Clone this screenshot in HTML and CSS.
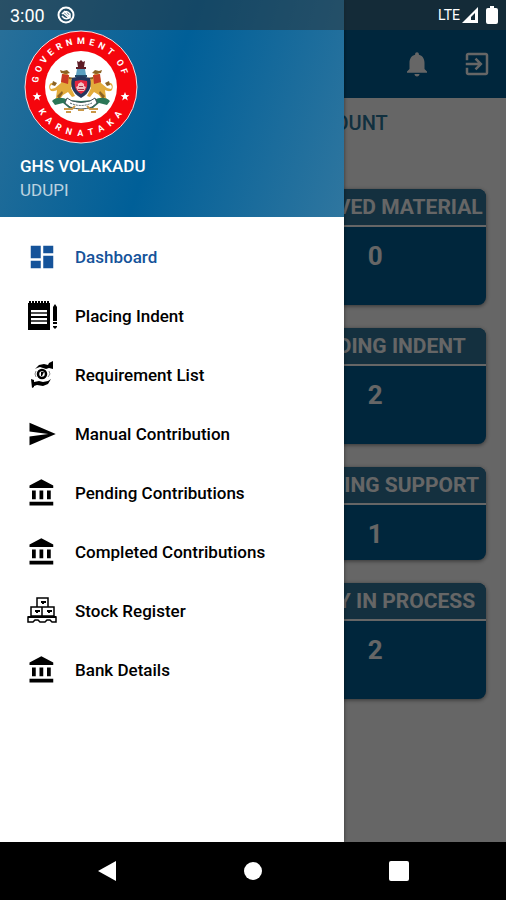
FILE: index.html
```html
<!DOCTYPE html>
<html lang="en">
<head>
  <meta charset="UTF-8">
  <meta name="viewport" content="width=device-width, initial-scale=1">
  <title>Dashboard</title>
  <link rel="stylesheet" href="styles.css">
</head>
<body>

  <!-- Shared icon shapes -->
  <svg class="sprite" aria-hidden="true">
    <symbol id="icon-bank" viewBox="0 0 24 24">
      <path d="M4 10v7h3v-7H4zm6 0v7h3v-7h-3zM2 22h19v-3H2v3zm14-12v7h3v-7h-3zM11.500 1L2 6v2h19V6l-9.500-5z"/>
    </symbol>
  </svg>

  <div class="screen">

    <!-- Page behind the drawer -->
    <div class="page">
      <header class="app-bar">
        <button type="button" class="icon-button" aria-label="Notifications">
          <svg viewBox="0 0 24 24"><path d="M12 22c1.100 0 2-.9 2-2h-4c0 1.100.9 2 2 2zm6-6v-5c0-3.070-1.640-5.640-4.500-6.320V4c0-.83-.67-1.500-1.500-1.500s-1.500.67-1.500 1.500v.68C7.630 5.360 6 7.920 6 11v5l-2 2v1h16v-1l-2-2z"/></svg>
        </button>
        <button type="button" class="icon-button" aria-label="Log out">
          <svg viewBox="0 0 24 24"><path d="M10.090 15.590L11.500 17l5-5-5-5-1.410 1.410L12.670 11H3v2h9.670l-2.580 2.590zM19 3H5c-1.110 0-2 .9-2 2v4h2V5h14v14H5v-4H3v4c0 1.100.89 2 2 2h14c1.100 0 2-.9 2-2V5c0-1.100-.9-2-2-2z"/></svg>
        </button>
      </header>

      <main class="content">
        <h1>MATERIALS REQUEST COUNT</h1>
        <div class="cards">
          <section class="card">
            <h2>APPROVED MATERIAL</h2>
            <p>0</p>
          </section>
          <section class="card">
            <h2>SPENDING INDENT</h2>
            <p>2</p>
          </section>
          <section class="card card-short">
            <h2>MATCHING SUPPORT</h2>
            <p>1</p>
          </section>
          <section class="card">
            <h2>SUPPLY IN PROCESS</h2>
            <p>2</p>
          </section>
        </div>
      </main>

      <div class="scrim"></div>

      <!-- Navigation drawer -->
      <aside class="drawer">
        <div class="drawer-header">
          <svg class="seal" viewBox="0 0 114 114" role="img" aria-label="Government of Karnataka">
            <circle cx="57" cy="57" r="56" fill="#f5050d" stroke="#f3dfe2" stroke-width="1"/>
            <circle cx="57" cy="57" r="36" fill="#fff"/>
            <path id="arc-top" d="M14 57A43 43 0 0 1 100 57" fill="none"/>
            <path id="arc-bottom" d="M8 57A49 49 0 0 0 106 57" fill="none"/>
            <text class="seal-text" dx="4 4 4 4 4 4 4 4 4 4 3 3 3"><textPath href="#arc-top">GOVERNMENT OF</textPath></text>
            <text class="seal-text" dx="25 6 6 6 6 6 6 6 6"><textPath href="#arc-bottom">KARNATAKA</textPath></text>
            <path fill="#fff" d="M13 62l1.200 3 3.200.2-2.500 2 .9 3.200-2.800-1.800-2.800 1.800.9-3.200-2.500-2 3.200-.2zM101 62l1.200 3 3.200.2-2.500 2 .9 3.200-2.800-1.800-2.800 1.800.9-3.200-2.500-2 3.200-.2z"/>
            <!-- Lion capital -->
            <path fill="#5d1c26" d="M53 31l2 1 2-2 2 2 2-1-1 6h-6zM52 37h10v2H52z"/>
            <path fill="#5b9fc0" d="M53 39h8l1 6H52z"/>
            <path fill="#21496a" d="M51 45h12v2H51z"/>
            <!-- Supporters -->
            <g id="lion">
              <path fill="#e3ac3c" d="M43 43c-3-1-5 1-5 4l-1 6-6 5-4 1c-2-2 0-5 2-4l1-2c-4-1-6 3-4 7 2 2 5 1 7 0l-1 8-3 4h5l5-7 5-3 4 5 3-1-4-8 3-5-4-5z"/>
              <path fill="#c83a24" d="M38 44l7 1-1 9-7-2z"/>
              <path fill="#8b6325" d="M36 40l3 1 4-1 3 3-4 1-5-1zM29 51l4 2-2 3-3-1zM33 66l5-5 1 2-4 6zM45 47l6 1v2l-6-1z"/>
            </g>
            <use href="#lion" transform="matrix(-1 0 0 1 114 0)"/>
            <!-- Shield -->
            <path fill="#24365d" d="M48 48l9-2 9 2c2 8 0 15-9 20-9-5-11-12-9-20z"/>
            <path fill="#e5263f" d="M51 51l6-1 6 1c1 6-1 10-6 13-5-3-7-7-6-13z"/>
            <path fill="#f3c0c2" d="M54 54l3-2 3 2v2l2 1-2 4h-6l-2-4 2-1z"/>
            <path fill="#a8324a" d="M55 56h4v1h-4zM54 59h6v1h-6z"/>
            <!-- Foliage and motto ribbon -->
            <path fill="#2b7657" d="M28 71c4-4 10-4 16-1l13 1 13-1c6-3 12-3 16 1l-3 4-8-2-6 5H45l-6-5-8 2z"/>
            <path fill="#fff" stroke="#43545a" stroke-width="1" d="M43 68l5 3q9 3 18 0l5-3 2 5-5 4q-11 4-22 0l-5-4z"/>
            <path fill="none" stroke="#485b61" stroke-width="1" stroke-dasharray="2 1" d="M46 73q11 5 22 0"/>
            <path fill="none" stroke="#c99848" stroke-width="2" d="M40 79h8l3-3M74 79h-8l-3-3M42 82h5M67 82h5M54 80h6"/>
          </svg>
          <p class="school">GHS VOLAKADU</p>
          <p class="district">UDUPI</p>
        </div>

        <nav class="menu">
          <a href="#dashboard" class="active">
            <svg viewBox="0 0 24 24"><path d="M3 13h8V3H3v10zm0 8h8v-6H3v6zm10 0h8V11h-8v10zm0-18v6h8V3h-8z"/></svg>
            Dashboard
          </a>
          <a href="#placing-indent">
            <svg viewBox="0 0 30 30">
              <path d="M1 2h22v27H1z"/>
              <path d="M3 0v3M6 0v3M9 0v3M12 0v3M15 0v3M18 0v3M21 0v3" stroke="currentColor" stroke-width="2"/>
              <path d="M4 10h16M4 14h16M4 18h16M4 22h16" stroke="#fff" stroke-width="2"/>
              <path d="M4 12h16M4 20h16" stroke="#999" stroke-width="1"/>
              <path d="M26 6l2-3 2 3v14h-4zM26 21h4v2h-4zM26 25h4v1l-2 2-2-2z"/>
            </svg>
            Placing Indent
          </a>
          <a href="#requirement-list">
            <svg viewBox="0 0 30 30">
              <path d="M8 9l4-4 5-1 4 1 1-2 4-2v8l-4-1-3 1-3-1-3-1-3 1z"/>
              <path d="M4 19l3 1v2l5-1 4 1 5-1 3-2-3 5-5 2-6-1-3 1v1l-2 1z"/>
              <circle cx="15" cy="14" r="4" fill="none" stroke="currentColor" stroke-width="2.500"/>
              <path d="M14 12h3l-2 4h-1z"/>
              <path d="M9 11l-1 3 1 3M22 11l1 3-2 3" fill="none" stroke="#888" stroke-width="1"/>
            </svg>
            Requirement List
          </a>
          <a href="#manual-contribution">
            <svg viewBox="0 0 24 24"><path d="M2 21L23 12 2 3v7l15 2-15 2z"/></svg>
            Manual Contribution
          </a>
          <a href="#pending-contributions">
            <svg><use href="#icon-bank"/></svg>
            Pending Contributions
          </a>
          <a href="#completed-contributions">
            <svg><use href="#icon-bank"/></svg>
            Completed Contributions
          </a>
          <a href="#stock-register">
            <svg viewBox="0 0 30 30">
              <g fill="none" stroke="currentColor" stroke-width="1.500">
                <path d="M10 2h11v9H10zM4 11h11v9H4zM15 11h12v9H15z"/>
                <path d="M1 21h28v5h-4l-2-2h-3l-2 2h-5l-2-2H8l-2 2H1z"/>
              </g>
              <path d="M14 5h5v2h-2v1h-2V7h-1zM8 14h5v2h-2v1H9v-1H8zM20 14h5v2h-2v1h-2v-1h-1zM1 20h28v2H1z"/>
            </svg>
            Stock Register
          </a>
          <a href="#bank-details">
            <svg><use href="#icon-bank"/></svg>
            Bank Details
          </a>
        </nav>
      </aside>

      <!-- Status bar -->
      <div class="status-bar">
        <span>3:00</span>
        <svg class="status-app" viewBox="0 0 18 18">
          <circle cx="9" cy="9" r="7.500" fill="none" stroke="#fff" stroke-width="2"/>
          <path d="M5 8q4-5 8 0v3L7 5M5 10q3 4 7 2L6 7" fill="none" stroke="#fff" stroke-width="1.500"/>
        </svg>
        <span class="network">LTE</span>
        <svg class="signal" viewBox="0 0 16 16"><path fill="#fff" fill-rule="evenodd" d="M0 16L16 0v16zM9 13h4V6l-4 4z"/></svg>
        <svg class="battery" viewBox="0 0 12 18"><path fill="#fff" d="M4 0h4v2h2q2 0 2 2v12q0 2-2 2H2q-2 0-2-2V4q0-2 2-2h2z"/></svg>
      </div>
    </div>

    <!-- System navigation -->
    <div class="system-nav">
      <button type="button" aria-label="Back"><svg viewBox="0 0 20 22"><path d="M1 11L19 1v20z"/></svg></button>
      <button type="button" aria-label="Home"><svg viewBox="0 0 20 22"><circle cx="10" cy="11" r="9"/></svg></button>
      <button type="button" aria-label="Recent apps"><svg viewBox="0 0 20 22"><rect y="1" width="20" height="20" rx="2"/></svg></button>
    </div>
  </div>

</body>
</html>
```
FILE: styles.css
```css
* {
  box-sizing: border-box;
}

body {
  margin: 0;
  font-family: Roboto, sans-serif;
  background: #000;
}

h1, h2, p {
  margin: 0;
}

svg {
  display: block;
  fill: currentColor;
}

button {
  display: flex;
  align-items: center;
  justify-content: center;
  padding: 0;
  border: none;
  background: none;
  color: inherit;
  cursor: pointer;
}

.sprite {
  display: none;
}

.screen {
  display: flex;
  flex-direction: column;
  min-height: 100vh;
}

.page {
  position: relative;
  flex: 1;
  background: #fff;
}

/* App bar */
.app-bar {
  display: flex;
  justify-content: flex-end;
  align-items: center;
  gap: 30px;
  height: 98px;
  padding: 30px 14px 0;
  background: #005f96;
  color: #fff;
}

.icon-button svg {
  width: 30px;
  height: 30px;
}

.content {
  padding: 12px 20px 40px;
}

h1 {
  font-size: 20px;
  line-height: 26px;
  font-weight: 500;
  text-align: center;
  color: #2b789e;
}

.cards {
  display: grid;
  grid-template-columns: 1fr 1fr;
  gap: 23px;
  margin-top: 53px;
}

.card {
  grid-column: 2;
  min-height: 116px;
  border-radius: 8px;
  overflow: hidden;
  background: #005f96;
  color: #fff;
  text-align: center;
  box-shadow: 0 1px 4px rgba(0, 0, 0, 0.5);
}

.card-short {
  min-height: 93px;
}

.card h2 {
  font-size: 21px;
  line-height: 36px;
  font-weight: 700;
  white-space: nowrap;
  background: #32789e;
  border-bottom: 2px solid #fff;
}

.card p {
  margin-top: 14px;
  font-size: 26px;
  line-height: 30px;
  font-weight: 700;
}

.scrim {
  position: absolute;
  inset: 0;
  background: rgba(0, 0, 0, 0.6);
}

/* Drawer */
.drawer {
  position: absolute;
  top: 0;
  bottom: 0;
  left: 0;
  width: 68%;
  background: #fff;
  box-shadow: 0 0 4px rgba(0, 0, 0, 0.5);
}

.drawer-header {
  padding: 30px 20px 15px;
  background: linear-gradient(108deg, #2a7099 0%, #005f98 48%, #2f769f 100%);
  color: #fff;
}

.seal {
  width: 114px;
  height: 114px;
  margin-left: 4px;
}

.seal-text {
  font-size: 9px;
  font-weight: 700;
  fill: #fff;
}

.school,
.district {
  font-size: 17px;
  line-height: 24px;
}

.school {
  margin-top: 10px;
  font-weight: 500;
}

.district {
  opacity: 0.7;
}

.menu {
  padding-top: 10px;
}

.menu a {
  display: flex;
  align-items: center;
  gap: 18px;
  height: 59px;
  padding-left: 27px;
  font-size: 17px;
  font-weight: 500;
  color: #000;
  text-decoration: none;
}

.menu a.active {
  color: #15539a;
}

.menu svg {
  width: 30px;
  height: 30px;
}

/* Status bar */
.status-bar {
  position: absolute;
  top: 0;
  left: 0;
  right: 0;
  display: flex;
  align-items: center;
  height: 30px;
  padding: 0 8px 0 10px;
  background: rgba(40, 48, 52, 0.5);
  color: #fff;
  font-size: 18px;
}

.status-app {
  width: 18px;
  height: 18px;
  margin-left: 12px;
}

.network {
  margin-left: auto;
  font-size: 14px;
}

.signal {
  width: 16px;
  height: 16px;
  margin-left: 2px;
}

.battery {
  width: 12px;
  height: 18px;
  margin-left: 8px;
}

/* System navigation */
.system-nav {
  display: flex;
  justify-content: center;
  gap: 98px;
  height: 58px;
  background: #000;
  color: #fff;
}

.system-nav button {
  width: 48px;
}

.system-nav svg {
  width: 20px;
  height: 22px;
}
```
